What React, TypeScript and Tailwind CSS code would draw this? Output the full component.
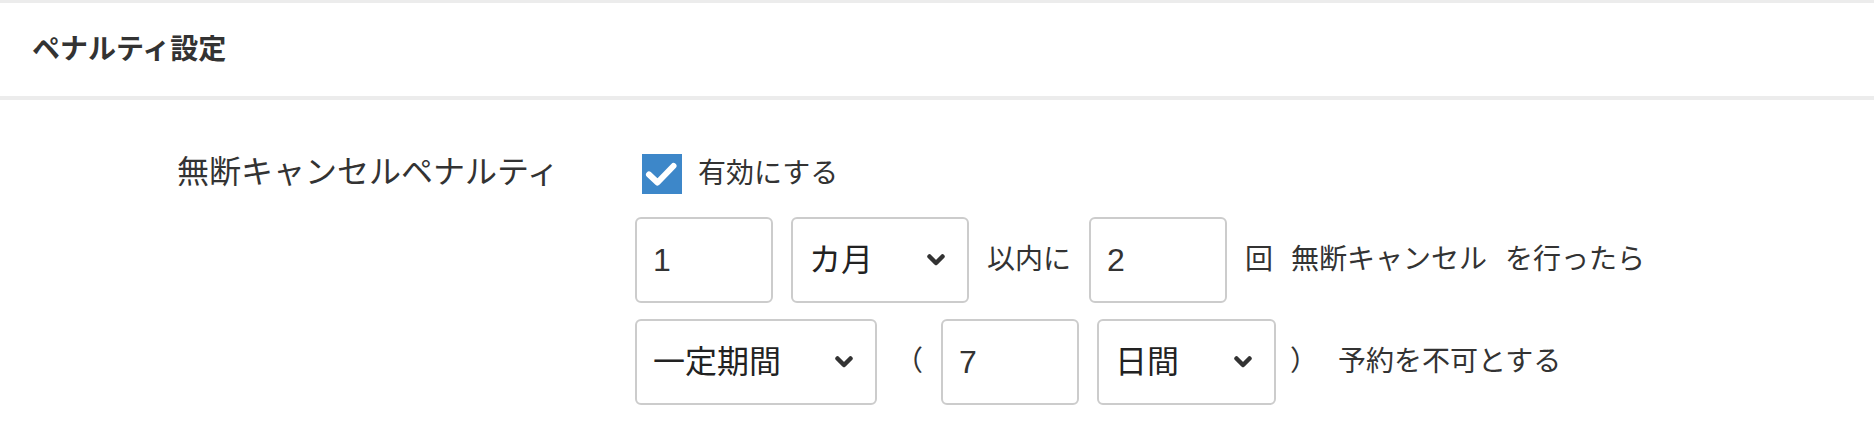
import React from 'react';

function Chevron() {
  return (
    <svg width="18" height="12" viewBox="0 0 18 12" className="shrink-0">
      <path d="M2.5 2.5 L9 9 L15.5 2.5" fill="none" stroke="#333" strokeWidth="4.5" strokeLinecap="round" strokeLinejoin="round" />
    </svg>
  );
}

function NumberBox({ value }: { value: string }) {
  return (
    <div className="flex h-[86px] w-[138px] items-center rounded-[6px] border-2 border-[#cccccc] bg-white px-[16px] text-[32px] text-[#333]">
      {value}
    </div>
  );
}

function SelectBox({ value, width }: { value: string; width: string }) {
  return (
    <div
      className={`flex h-[86px] items-center justify-between rounded-[6px] border-2 border-[#cccccc] bg-white pl-[16px] pr-[22px] text-[32px] text-[#222] ${width}`}
    >
      <span>{value}</span>
      <Chevron />
    </div>
  );
}

export default function App() {
  return (
    <div className="min-h-[438px] w-full bg-white font-['Liberation_Sans','Noto_Sans_CJK_JP',sans-serif] text-[#333]">
      <div className="border-t-[3px] border-[#ececec]" />
      <div className="flex h-[97px] items-center border-b-4 border-[#ececec] px-[32px]">
        <h2 className="text-[28px] font-bold text-[#333]">ペナルティ設定</h2>
      </div>

      <div className="flex pt-[54px]">
        <div className="w-[635px] shrink-0 pl-[177px] text-[32px] leading-[36px] text-[#333]">
          無断キャンセルペナルティ
        </div>

        <div className="flex flex-col">
          <label className="ml-[7px] flex h-[40px] items-center gap-[16px] text-[28px]">
            <span className="flex h-[40px] w-[40px] items-center justify-center bg-[#3d87c9]">
              <svg width="40" height="40" viewBox="0 0 40 40">
                <path d="M7 20.5 L15.5 28.5 L31.5 12" fill="none" stroke="#fff" strokeWidth="6" strokeLinecap="round" strokeLinejoin="round" />
              </svg>
            </span>
            有効にする
          </label>

          <div className="mt-[23px] flex items-center gap-[18px] text-[28px]">
            <NumberBox value="1" />
            <SelectBox value="カ月" width="w-[178px]" />
            <span>以内に</span>
            <NumberBox value="2" />
            <span>回</span>
            <span>無断キャンセル</span>
            <span>を行ったら</span>
          </div>

          <div className="mt-[16px] flex items-center gap-[18px] text-[28px]">
            <SelectBox value="一定期間" width="w-[242px]" />
            <span>（</span>
            <NumberBox value="7" />
            <SelectBox value="日間" width="w-[179px]" />
            <span className="-ml-[4px]">）</span>
            <span className="ml-[2px]">予約を不可とする</span>
          </div>
        </div>
      </div>
    </div>
  );
}
